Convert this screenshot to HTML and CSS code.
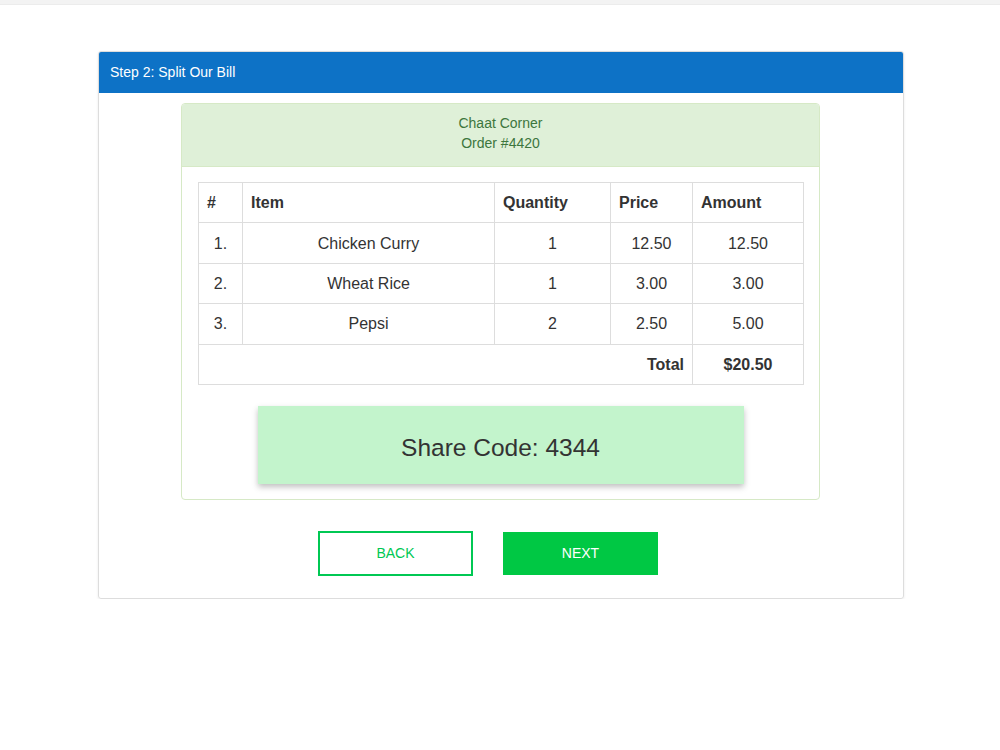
FILE: index.html
```html
<!DOCTYPE html>
<html lang="en">
<head>
  <meta charset="utf-8" />
  <meta name="viewport" content="width=device-width, initial-scale=1"/>
  <title>Split Our Bill</title>
  <link rel="stylesheet" href="styles.css">
</head>
<body>
  <div class="topbar"></div>

  <div class="step-panel">
    <div class="step-heading">Step 2: Split Our Bill</div>
    <div class="step-body">

      <div class="bill-panel">
        <div class="bill-heading">
          <div>Chaat Corner</div>
          <div>Order #4420</div>
        </div>
        <div class="bill-body">
          <table class="bill-table">
            <thead>
              <tr>
                <th class="col-num">#</th>
                <th class="col-item">Item</th>
                <th class="col-qty">Quantity</th>
                <th class="col-price">Price</th>
                <th class="col-amount">Amount</th>
              </tr>
            </thead>
            <tbody>
              <tr>
                <td>1.</td>
                <td>Chicken Curry</td>
                <td>1</td>
                <td>12.50</td>
                <td>12.50</td>
              </tr>
              <tr>
                <td>2.</td>
                <td>Wheat Rice</td>
                <td>1</td>
                <td>3.00</td>
                <td>3.00</td>
              </tr>
              <tr>
                <td>3.</td>
                <td>Pepsi</td>
                <td>2</td>
                <td>2.50</td>
                <td>5.00</td>
              </tr>
              <tr class="total-row">
                <td colspan="4" class="total-label">Total</td>
                <td>$20.50</td>
              </tr>
            </tbody>
          </table>

          <div class="share-code">Share Code: 4344</div>
        </div>
      </div>

      <div class="actions">
        <button class="btn btn-back">BACK</button>
        <button class="btn btn-next">NEXT</button>
      </div>

    </div>
  </div>
</body>
</html>
```

FILE: styles.css
```css
body {
  margin: 0;
  background: #fff;
  font-family: "Liberation Sans", Arial, sans-serif;
  color: #333;
}

.topbar {
  height: 4px;
  background: #f3f3f3;
  border-bottom: 1px solid #ececec;
}

.step-panel {
  width: 804px;
  margin: 46px 0 0 98px;
  border: 1px solid #ddd;
  border-radius: 3px;
  box-shadow: 0 1px 3px rgba(0, 0, 0, 0.08);
  overflow: hidden;
}

.step-heading {
  background: #0d72c6;
  color: #fff;
  font-size: 14px;
  height: 41px;
  line-height: 41px;
  padding: 0 11px;
}

.step-body {
  padding: 10px 0 22px 0;
}

.bill-panel {
  width: 637px;
  margin: 0 auto 0 82px;
  border: 1px solid #d6e9c6;
  border-radius: 4px;
  overflow: hidden;
}

.bill-heading {
  background: #dff0d8;
  color: #3c763d;
  font-size: 14px;
  line-height: 20px;
  text-align: center;
  padding: 9px 15px 13px;
  border-bottom: 1px solid #d6e9c6;
}

.bill-body {
  padding: 15px 16px 15px 16px;
}

.bill-table {
  width: 606px;
  border-collapse: collapse;
  font-size: 16px;
  margin-bottom: 21px;
}

.bill-table th,
.bill-table td {
  border: 1px solid #ddd;
  padding: 8px;
  line-height: 23px;
  height: 23.4px;
}

.bill-table th {
  text-align: left;
  font-weight: bold;
}

.bill-table td {
  text-align: center;
}

.col-num { width: 27px; }
.col-item { width: 235px; }
.col-qty { width: 99px; }
.col-price { width: 65px; }

.total-row td {
  font-weight: bold;
}

.bill-table .total-label {
  text-align: right;
}

.share-code {
  width: 486px;
  height: 78px;
  margin: 0 auto;
  background: #c3f4cc;
  box-shadow: 0 3px 6px rgba(0, 0, 0, 0.25);
  font-size: 24.5px;
  line-height: 84px;
  text-align: center;
  color: #333;
}

.actions {
  display: flex;
  justify-content: center;
  gap: 30px;
  margin-top: 31px;
  padding-right: 26px;
}

.btn {
  width: 155px;
  height: 45px;
  font-family: "Liberation Sans", Arial, sans-serif;
  font-size: 14px;
  cursor: pointer;
}

.btn-back {
  background: #fff;
  color: #00c853;
  border: 2px solid #00c853;
}

.btn-next {
  background: #00c844;
  color: #fff;
  border: 1px solid #00c844;
  margin-top: 1px;
  height: 43px;
}
```
